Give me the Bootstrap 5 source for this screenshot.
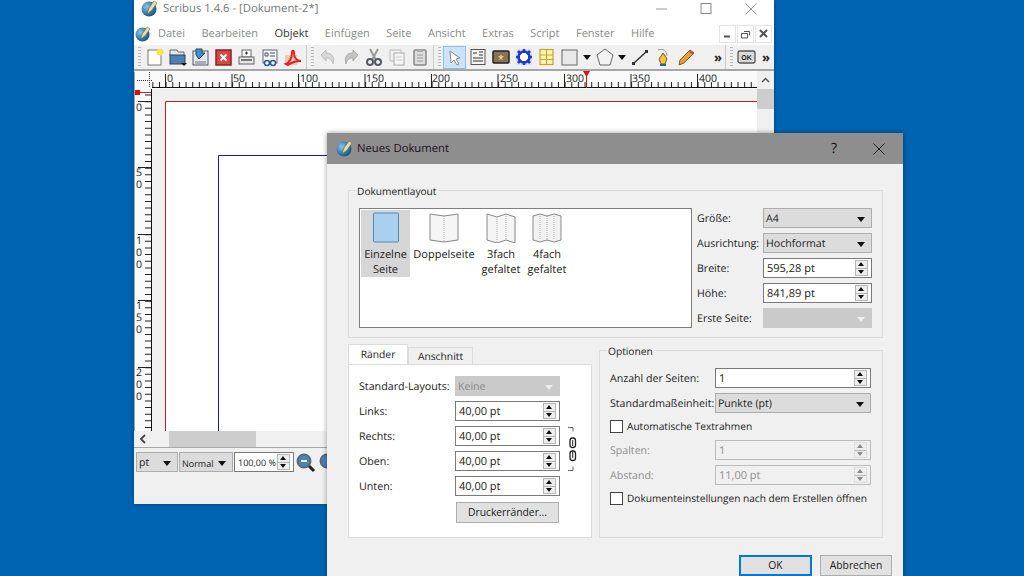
<!DOCTYPE html>
<html lang="de">
<head>
<meta charset="utf-8">
<title>Scribus</title>
<link href="https://cdn.jsdelivr.net/npm/bootstrap@5.3.0/dist/css/bootstrap.min.css" rel="stylesheet">
<style>
html,body{height:576px;overflow:hidden;}
body{background:#0063b1;font-family:"Open Sans","Noto Sans",sans-serif;font-size:11px;line-height:15px;color:#222;position:relative;white-space:nowrap;text-rendering:geometricPrecision;}
.win-main{position:absolute;left:134px;top:0;width:640px;height:504px;background:#f0f0f0;box-shadow:0 0 4px rgba(0,0,0,.35);}
.win-title{height:22px;background:#fff;color:#777;font-size:11.3px;padding:0 0 5px 7px;gap:5px;}
.win-ctl{margin-left:auto;gap:29px;padding-right:15px;}
.menu-row{height:23px;background:#fff;padding-left:1px;color:#8a8a8a;font-size:11px;}
.menu-items{gap:16.5px;margin-left:7px;}
.menu-items .act{color:#333;}
.mdi{margin-left:auto;gap:1px;padding-right:2px;}
.mdi-b{width:17px;height:18px;border:1px solid #e4e4e4;background:#fff;}
.tool-row{height:26px;background:#f0f0f0;border-bottom:2px solid #a6a6a6;}
.grip{width:3px;height:20px;margin:0 2px 0 4px;background:repeating-linear-gradient(#b8b8b8 0 1px,transparent 1px 3px);}
.tico{width:23px;height:23px;display:flex;align-items:center;justify-content:center;flex:none;}
.tico svg{display:block;}
.tico.on{background:#cde4f7;border:1px solid #8fc0e8;}
.tnarrow{width:12px;height:23px;flex:none;}
.tnarrow .caret-d{margin:0 auto;}
.tsep{width:1px;height:24px;background:#c9c9c9;margin-left:2px;}
.tdots{font-size:13px;font-weight:700;line-height:23px;color:#222;}
.dots-a{margin-left:auto;margin-right:1px;}
.dots-b{margin-left:4px;margin-right:4px;}
.work-row{height:360px;}
.work-row svg{display:block;}
.vs{width:17px;background:#f0f0f0;}
.vs-arrow{height:18px;}
.vs-thumb{height:20px;background:#cdcdcd;}
.hs{height:16px;width:623px;background:#f0f0f0;}
.hs-thumb{width:87px;height:16px;background:#cdcdcd;margin-left:17px;}
.hs-arrow{width:18px;padding-left:5px;}
.status-row{border-top:1px solid #a8a8a8;padding:4px 0 0 2px;gap:1px;}
.qbox{height:20px;border:1px solid #7a7a7a;background:#fff;padding:0 0 0 3px;color:#222;font-size:11px;}
.qcombo{background:#dcdcdc;border-color:#adadad;font-size:10.6px;padding:2px 0 0 2px;}
.qdis{background:#cacaca;border-color:#cacaca;color:#8a8a8a;}
.caret-d{display:block;margin-left:auto;margin-right:6px;width:0;height:0;border-left:4.5px solid transparent;border-right:4.5px solid transparent;border-top:5px solid #111;}
.qdis .caret-d{border-top-color:#eee;}
.spin{margin:0 3px 0 auto;width:13px;height:16px;border:1px solid #b5b5b5;background:#eee;flex:none;}
.spin i{display:block;height:7px;position:relative;}
.spin i+i{border-top:1px solid #b5b5b5;height:7px;}
.spin i::after{content:"";position:absolute;left:2px;top:1px;border-left:3.5px solid transparent;border-right:3.5px solid transparent;}
.spin i:first-child::after{border-bottom:4px solid #111;}
.spin i+i::after{border-top:4px solid #111;}
.qoff{border-color:#bcbcbc;background:#f0f0f0;color:#8f8f8f;}
.qoff .spin{border-color:#ddd;}
.qoff .spin i::after{border-top-color:#888;border-bottom-color:#888;}
.w-pt{width:42px;}.w-nor{width:54px;font-size:9px;}.w-zoom{width:60px;font-size:9px;}
.w-r{width:109px;}.w-m{width:105px;}.w-o{width:157px;}
.dlg{position:absolute;left:327px;top:133px;width:576px;height:460px;background:#f0f0f0;box-shadow:0 0 5px rgba(0,0,0,.4);}
.dlg-title{height:31px;background:#8e8e8e;padding-left:9px;gap:4px;color:#201020;font-size:11.3px;}
.dlg-ctl{margin-left:auto;padding-right:17px;gap:35px;}
.dlg-help{font-size:14px;}
.dlg-body{padding:26px 20px 0 21px;}
.gbox{border:1px solid #dcdcdc;position:relative;}
.glegend{position:absolute;top:-7px;left:7px;background:#f0f0f0;padding:0 1px;font-size:10.2px;}
.g-layout{height:148px;width:535px;padding:17px 11px 0 10px;}
.plist{width:333px;height:120px;border:1px solid #7f7f7f;background:#fff;padding:1px;text-align:center;flex:none;}
.pitem{padding-top:2px;height:67px;flex:none;}
.pitem svg{display:block;margin:0 auto 4px;}
.psel{background:#d6d6d6;width:49px;}
.p2{width:68px;}.p3{width:46px;}.p4{width:46px;}
.rcol{margin-left:5px;width:175px;gap:5px;}
.qrow{height:20px;}
.qlabel{width:66px;flex:none;font-size:10.6px;padding-top:2px;}
.lower{margin-top:6px;gap:7px;}
.tabs-wrap{width:244px;}
.nav-tabs.qtabs{border-bottom:0;height:20px;align-items:flex-end;}
.qtabs .nav-link{border-radius:0;padding:0;color:#222;font-size:10.3px;text-align:center;line-height:17px;}
.qtabs .nav-link.active{width:60px;height:21px;margin-bottom:-1px;padding-top:2px;background:#fff;border:1px solid #dcdcdc;border-bottom:0;color:#222;}
.qtabs .nav-link.off{width:65px;height:18px;line-height:18px;background:#f0f0f0;border:1px solid #dcdcdc;}
.tpane{height:174px;border:1px solid #dcdcdc;background:#fff;padding:11px 31px 0 10px;gap:5px;position:relative;}
.lab-m{width:96px;flex:none;font-size:10.7px;padding-top:2px;}
.chain{position:absolute;left:214px;top:62px;}
.qbtn.btn{border-radius:0;background:#e1e1e1;border:1px solid #adadad;color:#222;font-size:10.3px;padding:0;line-height:19px;height:21px;}
.btn-print{width:103px;margin:1px 0 0 97px;}
.g-opt{width:284px;height:188px;margin-top:6px;padding:17px 11px 0 10px;gap:5px;}
.lab-o{width:105px;flex:none;font-size:10.6px;padding-top:2px;}
.qcheck{gap:4px;height:17px;font-size:10.15px;}
.form-check-input.qc{width:13px;height:13px;margin:0;border:1px solid #444;border-radius:0;background-color:#fff;flex:none;}
.txt-off{color:#8f8f8f;}
.dlg-foot{padding:17px 0 0 0;gap:8px;justify-content:flex-end;width:544px;}
.btn-ok.btn{width:73px;border:2px solid #0078d7;line-height:17px;}
.btn-ab{width:72px;}
</style>
</head>
<body>
<section class="win-main d-flex flex-column">
  <div class="win-title d-flex align-items-center">
    <svg width="17" height="17" viewBox="0 0 17 17"><defs><radialGradient id="ball" cx=".35" cy=".35" r=".8"><stop offset="0" stop-color="#8fc4e8"/><stop offset=".6" stop-color="#2f75a8"/><stop offset="1" stop-color="#15405f"/></radialGradient></defs><circle cx="8" cy="9" r="7.5" fill="url(#ball)"/><path d="M6 14 8 8l5-7 3 2-5 7z" fill="#e8dfa8" stroke="#6b6136" stroke-width=".6"/></svg>
    <span>Scribus 1.4.6 - [Dokument-2*]</span>
    <div class="win-ctl d-flex align-items-center">
      <svg width="16" height="16" viewBox="0 0 16 16"><path d="M3 8h11" stroke="#999"/></svg>
      <svg width="16" height="16" viewBox="0 0 16 16"><rect x="3" y="2.500" width="10" height="10" fill="none" stroke="#888"/></svg>
      <svg width="16" height="16" viewBox="0 0 16 16"><path d="M2.500 2.500l11 11M13.500 2.500l-11 11" stroke="#999"/></svg>
    </div>
  </div>
  <div class="menu-row d-flex align-items-center">
    <svg width="16" height="16" viewBox="0 0 17 17"><circle cx="8" cy="9" r="7.500" fill="url(#ball)"/><path d="M6 14 8 8l5-7 3 2-5 7z" fill="#e8dfa8" stroke="#6b6136" stroke-width=".6"/></svg>
    <div class="menu-items d-flex">
      <span>Datei</span><span>Bearbeiten</span><span class="act">Objekt</span><span>Einfügen</span><span>Seite</span><span>Ansicht</span><span>Extras</span><span>Script</span><span>Fenster</span><span>Hilfe</span>
    </div>
    <div class="mdi d-flex">
      <div class="mdi-b d-flex align-items-center justify-content-center"><svg width="9" height="9"><path d="M1 7.500h6" stroke="#555" stroke-width="2"/></svg></div>
      <div class="mdi-b d-flex align-items-center justify-content-center"><svg width="10" height="10"><path d="M3 2.500h5.500v4M.5 4.500h6v4.500h-6z" fill="none" stroke="#555"/></svg></div>
      <div class="mdi-b d-flex align-items-center justify-content-center"><svg width="9" height="9"><path d="M1 1l7 7M8 1l-7 7" stroke="#555" stroke-width="2"/></svg></div>
    </div>
  </div>
  <div class="tool-row d-flex align-items-center">
    <div class="grip"></div>
    <div class="tico"><svg width="20" height="20" viewBox="0 0 20 20"><rect x="3" y="3" width="13" height="15" fill="#fff" stroke="#777"/><circle cx="15" cy="5" r="3.500" fill="#f6e64a"/></svg></div>
    <div class="tico"><svg width="20" height="20" viewBox="0 0 20 20"><path d="M2 3h7l1 2h6v4H2z" fill="#dfe6ec" stroke="#667"/><rect x="2" y="8" width="15" height="9" fill="#4f80b5" stroke="#345"/><path d="M13 16h6l-3 3z" fill="#111"/></svg></div>
    <div class="tico"><svg width="20" height="20" viewBox="0 0 20 20"><rect x="2" y="4" width="15" height="14" fill="#e5e8ea" stroke="#556"/><rect x="4" y="14" width="11" height="3" fill="#aab"/><path d="M5 2h6v4h3l-6 6-3-4z" fill="#3f8fcf" stroke="#246"/></svg></div>
    <div class="tico"><svg width="20" height="20" viewBox="0 0 20 20"><rect x="2" y="3" width="15" height="15" fill="#d24a45" stroke="#8f2222" stroke-width="1.500"/><path d="M6.500 7.500l6 6M12.500 7.500l-6 6" stroke="#fff" stroke-width="2"/></svg></div>
    <div class="tico"><svg width="20" height="20" viewBox="0 0 20 20"><rect x="5" y="3" width="9" height="7" fill="#fff" stroke="#666"/><path d="M8 6h3M9.500 4.500v3" stroke="#333"/><rect x="2" y="10" width="15" height="7" fill="#e6e6e6" stroke="#666"/><path d="M4 13h11" stroke="#555" stroke-width="1.500"/></svg></div>
    <div class="tico"><svg width="20" height="20" viewBox="0 0 20 20"><rect x="3" y="3" width="14" height="13" fill="#f3f3f3" stroke="#667"/><path d="M5 6h3v3H5zM10 6h5M10 9h5" stroke="#456" fill="none"/><circle cx="7" cy="16" r="2.500" fill="#fff" stroke="#27599a" stroke-width="1.500"/><circle cx="13" cy="16" r="2.500" fill="#fff" stroke="#27599a" stroke-width="1.500"/></svg></div>
    <div class="tico"><svg width="20" height="20" viewBox="0 0 20 20"><rect x="2" y="8" width="12" height="10" fill="#f6c3ba"/><path d="M3 17c3-1 6-6 6-11 0-3 2-3 2 0 0 5 3 8 7 8-4 0-9 1-13 4z" fill="none" stroke="#d62a20" stroke-width="2"/></svg></div>
    <div class="tsep"></div><div class="grip"></div>
    <div class="tico"><svg width="20" height="20" viewBox="0 0 20 20"><path d="M3 8l5-5v3c6 0 9 4 7 11-1-4-3-6-7-6v3z" fill="#d8d8d8" stroke="#bcbcbc"/></svg></div>
    <div class="tico"><svg width="20" height="20" viewBox="0 0 20 20"><path d="M17 8l-5-5v3C6 6 3 10 5 17c1-4 3-6 7-6v3z" fill="#c4c4c4" stroke="#aaa"/></svg></div>
    <div class="tico"><svg width="20" height="20" viewBox="0 0 20 20"><path d="M6 2l6 11M14 2L8 13" stroke="#999" stroke-width="2"/><circle cx="6" cy="15" r="3" fill="none" stroke="#556" stroke-width="2"/><circle cx="14" cy="15" r="3" fill="none" stroke="#556" stroke-width="2"/></svg></div>
    <div class="tico"><svg width="20" height="20" viewBox="0 0 20 20"><rect x="3" y="3" width="11" height="11" fill="#f0f0f0" stroke="#bbb"/><rect x="7" y="6" width="10" height="12" fill="#f5f5f5" stroke="#aaa"/><path d="M9 10h6M9 13h6" stroke="#ccc"/></svg></div>
    <div class="tico"><svg width="20" height="20" viewBox="0 0 20 20"><rect x="4" y="3" width="12" height="15" rx="1" fill="#ddd" stroke="#888" stroke-width="1.500"/><rect x="7" y="2" width="6" height="3" fill="#aaa"/><path d="M7 8h6M7 11h6M7 14h6" stroke="#999"/></svg></div>
    <div class="tsep"></div><div class="grip"></div>
    <div class="tico on"><svg width="20" height="20" viewBox="0 0 20 20"><path d="M5 4l10 7-4 1 3 5-2 1-3-5-3 3z" fill="#fff" stroke="#889"/></svg></div>
    <div class="tico"><svg width="20" height="20" viewBox="0 0 20 20"><rect x="3" y="2.500" width="14" height="15" fill="#f5f5f5" stroke="#555"/><path d="M5 6h4M11 5h4M11 8h4M5 11h10M5 14h10" stroke="#333"/></svg></div>
    <div class="tico"><svg width="20" height="20" viewBox="0 0 20 20"><rect x="2" y="4" width="16" height="12" rx="1" fill="#8a7257" stroke="#222" stroke-width="1.500"/><path d="M10 7l1 2h2l-2 2 1 2-2-1-2 1 1-2-2-2h2z" fill="#e8c77a"/></svg></div>
    <div class="tico"><svg width="20" height="20" viewBox="0 0 20 20"><rect x="2" y="2" width="16" height="16" fill="#d9e3f5"/><circle cx="10" cy="10" r="5.500" fill="#fff" stroke="#2238c9" stroke-width="2.500"/><path d="M10 2v4M10 14v4M2 10h4M14 10h4M4 4l3 3M16 4l-3 3M4 16l3-3M16 16l-3-3" stroke="#2238c9" stroke-width="2.500"/></svg></div>
    <div class="tico"><svg width="20" height="20" viewBox="0 0 20 20"><rect x="3" y="2.500" width="13" height="15" fill="#fbf3b8" stroke="#c9a520" stroke-width="1.200"/><path d="M3 8h13M3 12.500h13M9.500 3v14" stroke="#c9a520"/></svg></div>
    <div class="tico"><svg width="20" height="20" viewBox="0 0 20 20"><rect x="2" y="3" width="15" height="15" fill="#e9e9e9" stroke="#666"/></svg></div>
    <div class="tnarrow d-flex align-items-center"><span class="caret-d"></span></div>
    <div class="tico"><svg width="20" height="20" viewBox="0 0 20 20"><path d="M10 2l8 6-3 10H5L2 8z" fill="#f3f3f3" stroke="#666"/></svg></div>
    <div class="tnarrow d-flex align-items-center"><span class="caret-d"></span></div>
    <div class="tico"><svg width="20" height="20" viewBox="0 0 20 20"><path d="M3 17L17 4" stroke="#333" stroke-width="1.500"/><path d="M2 15h3v3H2zM15 3h3v3h-3z" fill="#333"/></svg></div>
    <div class="tico"><svg width="20" height="20" viewBox="0 0 20 20"><path d="M5 3c5-2 9 1 9 6" fill="none" stroke="#999"/><path d="M10 6l4 6-2 5H8l-2-5z" fill="#f2c63c" stroke="#7a5c10"/><path d="M7 18h6" stroke="#2a5ea8" stroke-width="2"/></svg></div>
    <div class="tico"><svg width="20" height="20" viewBox="0 0 20 20"><path d="M3 18l1-5L14 3l4 3L8 16z" fill="#e2a33c" stroke="#8a5a1c"/><path d="M14 3l4 3-1 2-4-3z" fill="#d34a3c"/></svg></div>
    <div class="tdots dots-a">»</div>
    <div class="tsep"></div><div class="grip"></div>
    <div class="tico"><svg width="22" height="20" viewBox="0 0 22 20"><rect x="2" y="4" width="17" height="12" rx="2" fill="#dadada" stroke="#555" stroke-width="1.300"/><text x="10.500" y="12.500" text-anchor="middle" font-size="7" font-weight="700" font-family="Liberation Sans" fill="#222">OK</text></svg></div>
    <div class="tdots dots-b">»</div>
  </div>
  <div class="work-row d-flex">
    <svg width="623" height="360" viewBox="134 72 623 360" font-family="Open Sans" font-size="10.500" fill="#222">
      <rect x="134" y="72" width="623" height="360" fill="#fafafa"/>
      <rect x="152" y="90" width="605" height="342" fill="#f0f0f0"/>
      <rect x="165" y="102" width="592" height="330" fill="#fff"/>
      <path d="M165.500 432V102.500H757" fill="none" stroke="#c42020"/>
      <path d="M218.500 432V156.500H757" fill="none" stroke="#1a1aaa"/>
      <path d="M134.500 73v359" stroke="#9aa6b0"/>
      <path d="M137 81.500h16M149.500 73v16" stroke="#333" stroke-dasharray="1 1"/>
      <path d="M152 88.500h605M151.500 90v342" stroke="#111"/>
      <path d="M152 85.500h605" stroke="#222" stroke-width="5" stroke-dasharray="1 5.650" stroke-dashoffset="-0.300"/>
      <path d="M165.500 75v13M232 75v13M298.500 75v13M365 75v13M431.500 75v13M498 75v13M564.500 75v13M631 75v13M697.500 75v13" stroke="#222"/>
      <text x="167" y="83">0</text><text x="233" y="83">50</text><text x="300" y="83">100</text><text x="366" y="83">150</text><text x="432" y="83">200</text><text x="500" y="83">250</text><text x="566" y="83">300</text><text x="632" y="83">350</text><text x="699" y="83">400</text>
      <path d="M583 72h7l-3.500 6z" fill="#e01010"/><path d="M586.500 76v13" stroke="#e01010"/>
      <path d="M136 93.500h15" stroke="#d02020"/><rect x="135" y="91" width="5" height="5" fill="#d81010"/>
      <path d="M148 90v342" stroke="#222" stroke-width="6" stroke-dasharray="1 5.650" stroke-dashoffset="-5.500"/>
      <path d="M138 102.500h13M138 168.500h13M138 235.500h13M138 301.500h13M138 368.500h13" stroke="#222"/>
      <text x="136" y="112">0</text>
      <text x="136" y="177">5<tspan x="136" dy="12">0</tspan></text>
      <text x="136" y="245">1<tspan x="136" dy="12">0</tspan><tspan x="136" dy="12">0</tspan></text>
      <text x="136" y="310">1<tspan x="136" dy="12">5</tspan><tspan x="136" dy="12">0</tspan></text>
      <text x="136" y="377">2<tspan x="136" dy="12">0</tspan><tspan x="136" dy="12">0</tspan></text>
    </svg>
    <div class="vs">
      <div class="vs-arrow d-flex align-items-center justify-content-center"><svg width="9" height="6"><path d="M1 5l3.500-3.500L8 5" fill="none" stroke="#555" stroke-width="1.500"/></svg></div>
      <div class="vs-thumb"></div>
    </div>
  </div>
  <div class="hs d-flex align-items-center">
    <div class="hs-arrow"><svg width="8" height="10" class="d-block"><path d="M6 1L2 5l4 4" fill="none" stroke="#444" stroke-width="1.800"/></svg></div>
    <div class="hs-thumb"></div>
  </div>
  <div class="status-row d-flex align-items-start">
    <div class="qbox qcombo w-pt d-flex align-items-center">pt<span class="caret-d"></span></div>
    <div class="qbox qcombo w-nor d-flex align-items-center">Normal<span class="caret-d"></span></div>
    <div class="qbox w-zoom d-flex align-items-center">100,00 %<span class="spin"><i></i><i></i></span></div>
    <svg width="22" height="22" viewBox="0 0 22 22"><circle cx="9" cy="9" r="6.500" fill="#4a83b5" stroke="#5c6a78" stroke-width="2"/><path d="M6 9h6" stroke="#fff" stroke-width="2"/><path d="M14 14l5 5" stroke="#222" stroke-width="3"/></svg>
    <svg width="10" height="22" viewBox="0 0 10 22"><circle cx="9" cy="9" r="6.500" fill="#4a83b5" stroke="#5c6a78" stroke-width="2"/></svg>
  </div>
</section>

<section class="dlg">
  <div class="dlg-title d-flex align-items-center">
    <svg width="17" height="17" viewBox="0 0 17 17"><circle cx="8" cy="9" r="7.500" fill="url(#ball)"/><path d="M6 14 8 8l5-7 3 2-5 7z" fill="#e8dfa8" stroke="#6b6136" stroke-width=".6"/></svg>
    <span>Neues Dokument</span>
    <div class="dlg-ctl d-flex align-items-center">
      <span class="dlg-help">?</span>
      <svg width="14" height="14" viewBox="0 0 14 14"><path d="M1.500 1.500l11 11M12.500 1.500l-11 11" stroke="#222"/></svg>
    </div>
  </div>
  <div class="dlg-body">
    <div class="gbox g-layout d-flex">
      <span class="glegend">Dokumentlayout</span>
      <div class="plist d-flex">
        <div class="pitem psel"><svg width="28" height="31" viewBox="0 0 28 31"><rect x="1.500" y="1" width="25" height="29" rx="1" fill="#a9d0ee" stroke="#4f88b5"/></svg>Einzelne<br>Seite</div>
        <div class="pitem p2"><svg width="30" height="31" viewBox="0 0 30 31"><path d="M1 2l14 2 14-2v26l-14 2-14-2z" fill="#f5f5f5" stroke="#888"/><path d="M15 4v26" stroke="#aaa" stroke-dasharray="1 1"/></svg>Doppelseite</div>
        <div class="pitem p3"><svg width="32" height="31" viewBox="0 0 32 31"><path d="M2 2l10 3 9-3 9 3v26l-9-3-9 3-10-3z" fill="#f5f5f5" stroke="#888"/><path d="M12 5v26M21 2v26" stroke="#aaa" stroke-dasharray="1 1"/></svg>3fach<br>gefaltet</div>
        <div class="pitem p4"><svg width="32" height="31" viewBox="0 0 32 31"><path d="M2 4l7-2 7 2 7-2 7 2v24l-7 2-7-2-7 2-7-2z" fill="#f2f2f2" stroke="#888"/><path d="M9 2v26M16 4v24M23 2v26" stroke="#aaa" stroke-dasharray="1 1"/></svg>4fach<br>gefaltet</div>
      </div>
      <div class="rcol d-flex flex-column">
        <div class="qrow d-flex align-items-center"><span class="qlabel">Größe:</span><div class="qbox qcombo w-r d-flex align-items-center">A4<span class="caret-d"></span></div></div>
        <div class="qrow d-flex align-items-center"><span class="qlabel">Ausrichtung:</span><div class="qbox qcombo w-r d-flex align-items-center">Hochformat<span class="caret-d"></span></div></div>
        <div class="qrow d-flex align-items-center"><span class="qlabel">Breite:</span><div class="qbox w-r d-flex align-items-center">595,28 pt<span class="spin"><i></i><i></i></span></div></div>
        <div class="qrow d-flex align-items-center"><span class="qlabel">Höhe:</span><div class="qbox w-r d-flex align-items-center">841,89 pt<span class="spin"><i></i><i></i></span></div></div>
        <div class="qrow d-flex align-items-center"><span class="qlabel">Erste Seite:</span><div class="qbox qcombo qdis w-r d-flex align-items-center"><span class="caret-d"></span></div></div>
      </div>
    </div>
    <div class="lower d-flex">
      <div class="tabs-wrap">
        <ul class="nav nav-tabs qtabs">
          <li class="nav-item"><a class="nav-link active" href="#">Ränder</a></li>
          <li class="nav-item"><a class="nav-link off" href="#">Anschnitt</a></li>
        </ul>
        <div class="tpane d-flex flex-column">
          <div class="qrow d-flex align-items-center"><span class="lab-m">Standard-Layouts:</span><div class="qbox qcombo qdis w-m d-flex align-items-center">Keine<span class="caret-d"></span></div></div>
          <div class="qrow d-flex align-items-center"><span class="lab-m">Links:</span><div class="qbox w-m d-flex align-items-center">40,00 pt<span class="spin"><i></i><i></i></span></div></div>
          <div class="qrow d-flex align-items-center"><span class="lab-m">Rechts:</span><div class="qbox w-m d-flex align-items-center">40,00 pt<span class="spin"><i></i><i></i></span></div></div>
          <div class="qrow d-flex align-items-center"><span class="lab-m">Oben:</span><div class="qbox w-m d-flex align-items-center">40,00 pt<span class="spin"><i></i><i></i></span></div></div>
          <div class="qrow d-flex align-items-center"><span class="lab-m">Unten:</span><div class="qbox w-m d-flex align-items-center">40,00 pt<span class="spin"><i></i><i></i></span></div></div>
          <button class="btn qbtn btn-print" type="button">Druckerränder...</button>
          <svg class="chain" width="14" height="44" viewBox="0 0 14 44"><path d="M5 .5h5v4M5 43.500h5v-4" fill="none" stroke="#666"/><rect x="7" y="11" width="5.500" height="9.500" rx="2.500" fill="none" stroke="#222" stroke-width="1.300"/><path d="M9.700 13v6" stroke="#222"/><rect x="7" y="24" width="5.500" height="9.500" rx="2.500" fill="none" stroke="#222" stroke-width="1.300"/><path d="M9.700 25v6" stroke="#222"/></svg>
        </div>
      </div>
      <div class="gbox g-opt d-flex flex-column">
        <span class="glegend">Optionen</span>
        <div class="qrow d-flex align-items-center"><span class="lab-o">Anzahl der Seiten:</span><div class="qbox w-o d-flex align-items-center">1<span class="spin"><i></i><i></i></span></div></div>
        <div class="qrow d-flex align-items-center"><span class="lab-o">Standardmaßeinheit:</span><div class="qbox qcombo w-o d-flex align-items-center">Punkte (pt)<span class="caret-d"></span></div></div>
        <div class="qcheck d-flex align-items-center"><input class="form-check-input qc" type="checkbox" aria-label="Automatische Textrahmen"><span>Automatische Textrahmen</span></div>
        <div class="qrow d-flex align-items-center"><span class="lab-o txt-off">Spalten:</span><div class="qbox qoff w-o d-flex align-items-center">1<span class="spin"><i></i><i></i></span></div></div>
        <div class="qrow d-flex align-items-center"><span class="lab-o txt-off">Abstand:</span><div class="qbox qoff w-o d-flex align-items-center">11,00 pt<span class="spin"><i></i><i></i></span></div></div>
        <div class="qcheck d-flex align-items-center"><input class="form-check-input qc" type="checkbox" aria-label="Dokumenteinstellungen"><span>Dokumenteinstellungen nach dem Erstellen öffnen</span></div>
      </div>
    </div>
    <div class="dlg-foot d-flex">
      <button class="btn qbtn btn-ok" type="button">OK</button>
      <button class="btn qbtn btn-ab" type="button">Abbrechen</button>
    </div>
  </div>
</section>
<script src="https://cdn.jsdelivr.net/npm/bootstrap@5.3.0/dist/js/bootstrap.bundle.min.js"></script>
</body>
</html>
